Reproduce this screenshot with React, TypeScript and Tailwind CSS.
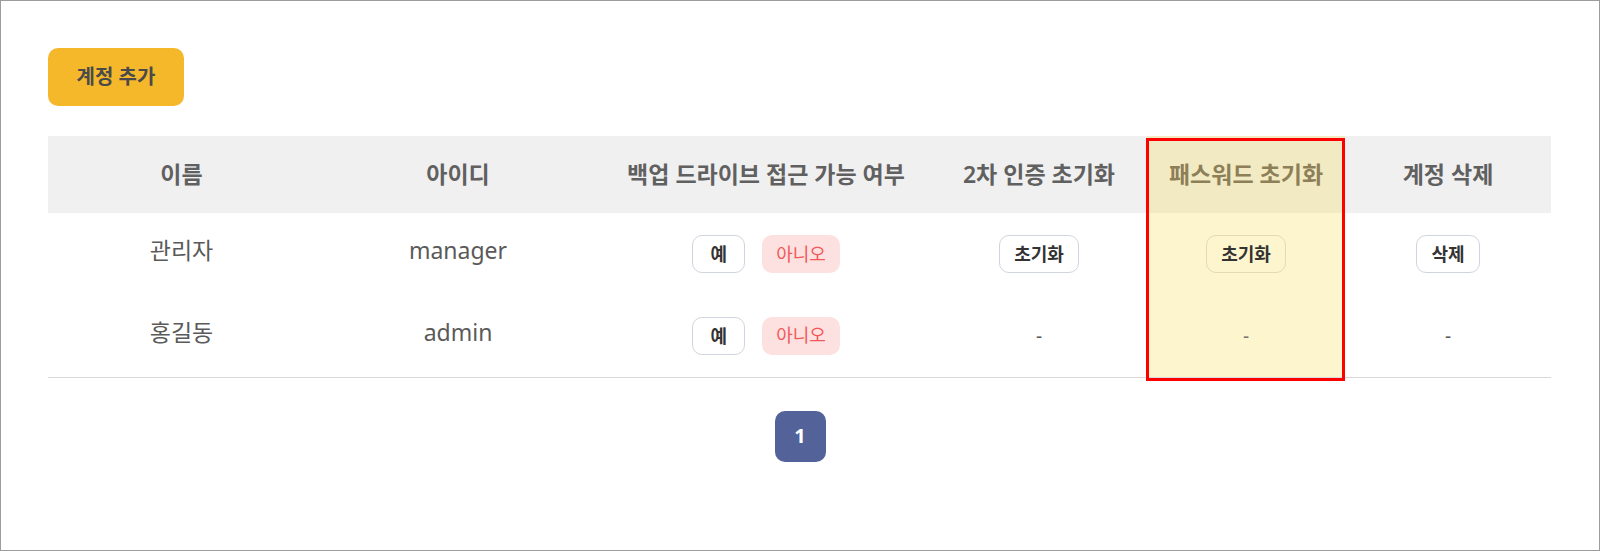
import React from "react";

type Row = {
    name: string;
    id: string;
    canReset: boolean;
};

const rows: Row[] = [
    { name: "관리자", id: "manager", canReset: true },
    { name: "홍길동", id: "admin", canReset: false },
];

const font = { fontFamily: '"Noto Sans", "Noto Sans CJK KR", sans-serif' };

function OutlineBtn({ label, warm }: { label: string; warm?: boolean }) {
    return (
        <button
            className={`h-[38px] min-w-[53px] rounded-[10px] border px-[14px] text-[18px] font-bold leading-none text-[#333] ${
                warm ? "border-[#e3dab4] bg-transparent" : "border-[#cfd4de] bg-white"
            }`}
        >
            {label}
        </button>
    );
}

export default function App() {
    return (
        <div className="h-[551px] w-full border border-[#9c9c9c] bg-white px-[47px] pt-[47px]" style={font}>
            <button className="h-[58px] w-[136px] rounded-[10px] bg-[#f5b82b] text-[20px] font-bold text-[#4a4a4a]">
                계정 추가
            </button>

            <div className="relative mt-[30px]">
                <table className="w-[1503px] table-fixed border-collapse text-center">
                    <colgroup>
                        <col className="w-[267px]" />
                        <col className="w-[286px]" />
                        <col className="w-[330px]" />
                        <col className="w-[216px]" />
                        <col className="w-[198px]" />
                        <col className="w-[206px]" />
                    </colgroup>
                    <thead>
                        <tr className="h-[77px] bg-[#f0f0f0] text-[23px] text-[#606060]">
                            <th className="font-semibold">이름</th>
                            <th className="font-semibold">아이디</th>
                            <th className="font-semibold">백업 드라이브 접근 가능 여부</th>
                            <th className="font-semibold">2차 인증 초기화</th>
                            <th className="bg-[#f2eac3] font-semibold text-[#8d7f57]">패스워드 초기화</th>
                            <th className="font-semibold">계정 삭제</th>
                        </tr>
                    </thead>
                    <tbody className="text-[23px] text-[#5a5a5a]">
                        {rows.map((r, i) => (
                            <tr key={r.id} className={`h-[82px] ${i === rows.length - 1 ? "border-b border-[#d9d9d9]" : ""}`}>
                                <td className="pb-[8px]">{r.name}</td>
                                <td className="pb-[8px]">{r.id}</td>
                                <td>
                                    <div className="flex items-center justify-center gap-[17px]">
                                        <OutlineBtn label="예" />
                                        <span className="flex h-[38px] items-center rounded-[10px] bg-[#fde1e1] px-[14px] text-[18px] text-[#f25858]">
                                            아니오
                                        </span>
                                    </div>
                                </td>
                                <td className="text-[19px]">{r.canReset ? <OutlineBtn label="초기화" /> : "-"}</td>
                                <td className="bg-[#fdf5cd] text-[19px] text-[#777]">
                                    {r.canReset ? <OutlineBtn label="초기화" warm /> : "-"}
                                </td>
                                <td className="text-[19px]">{r.canReset ? <OutlineBtn label="삭제" /> : "-"}</td>
                            </tr>
                        ))}
                    </tbody>
                </table>

                {/* highlight frame over the password column */}
                <div className="pointer-events-none absolute left-[1098px] top-[2px] h-[243px] w-[199px] border-[3px] border-[#ff0000]" />
            </div>

            <div className="mt-[33px] flex justify-center">
                <button className="flex h-[51px] w-[51px] items-center justify-center rounded-[10px] bg-[#54629a] text-[20px] font-bold text-white">
                    1
                </button>
            </div>
        </div>
    );
}
